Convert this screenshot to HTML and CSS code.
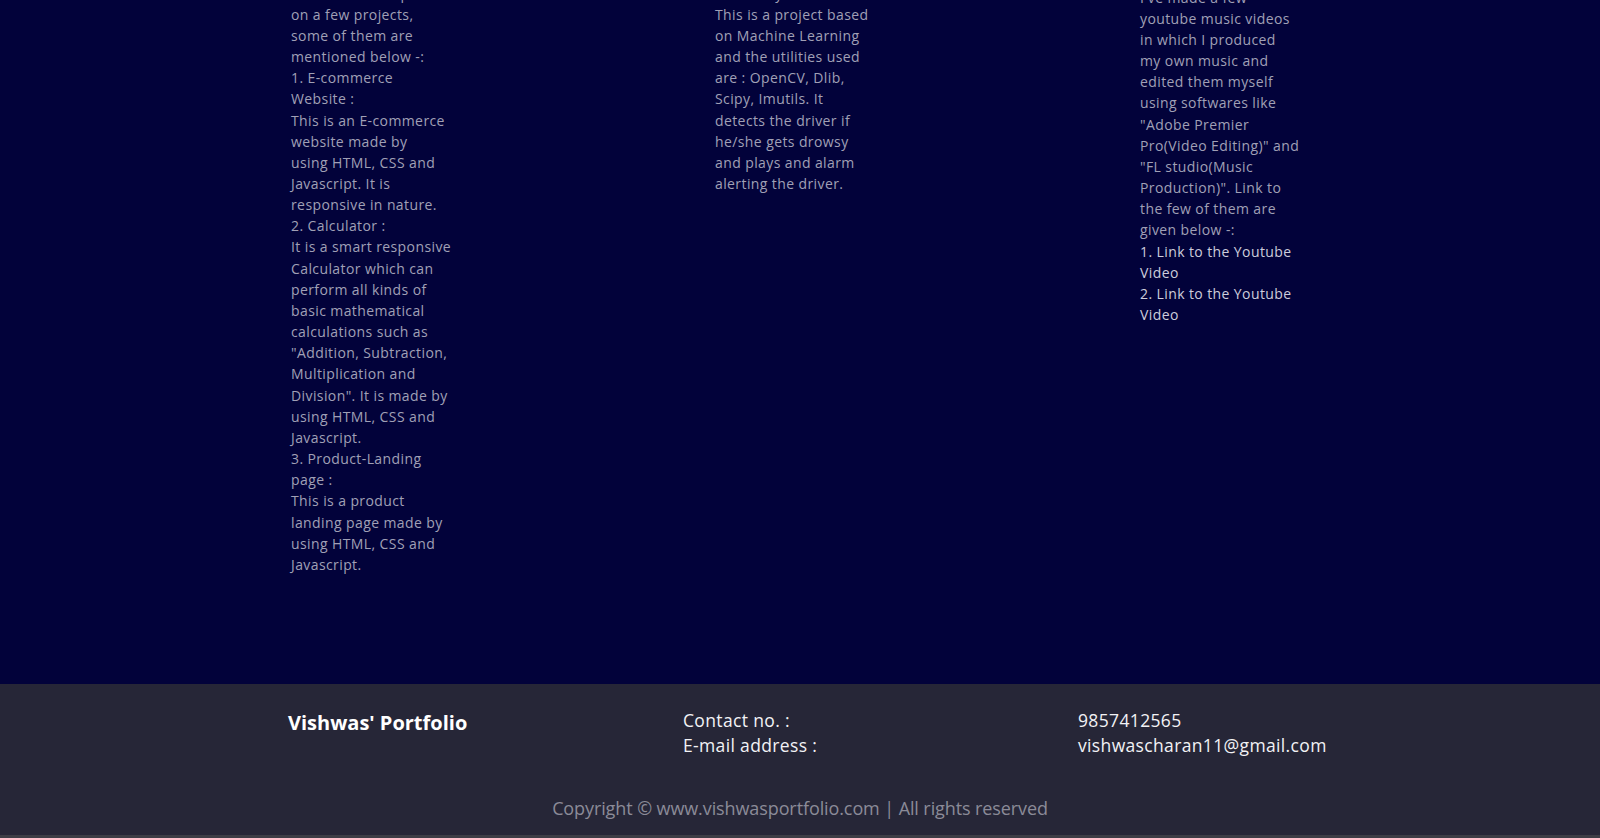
FILE: index.html
```html
<!DOCTYPE html>
<html lang="en">
<head>
<meta charset="utf-8">
<title>Vishwas' Portfolio</title>
<link rel="stylesheet" href="styles.css">
</head>
<body>
<main class="works">
  <section class="work">
    <p class="text">I have worked upon<br>on a few projects,<br>some of them are<br>mentioned below -:<br>1. E-commerce<br>Website :<br>This is an E-commerce<br>website made by<br>using HTML, CSS and<br>Javascript. It is<br>responsive in nature.<br>2. Calculator :<br>It is a smart responsive<br>Calculator which can<br>perform all kinds of<br>basic mathematical<br>calculations such as<br>"Addition, Subtraction,<br>Multiplication and<br>Division". It is made by<br>using HTML, CSS and<br>Javascript.<br>3. Product-Landing<br>page :<br>This is a product<br>landing page made by<br>using HTML, CSS and<br>Javascript.</p>
  </section>
  <section class="work">
    <p class="text">1. Drowsy Driver Alert :<br>This is a project based<br>on Machine Learning<br>and the utilities used<br>are : OpenCV, Dlib,<br>Scipy, Imutils. It<br>detects the driver if<br>he/she gets drowsy<br>and plays and alarm<br>alerting the driver.</p>
  </section>
  <section class="work work-shift">
    <p class="text">I've made a few<br>youtube music videos<br>in which I produced<br>my own music and<br>edited them myself<br>using softwares like<br>"Adobe Premier<br>Pro(Video Editing)" and<br>"FL studio(Music<br>Production)". Link to<br>the few of them are<br>given below -:<br><a class="link" href="#">1. Link to the Youtube<br>Video</a><br><a class="link" href="#">2. Link to the Youtube<br>Video</a></p>
  </section>
</main>
<footer class="footer">
  <div class="footer-top">
    <div class="brand">Vishwas' Portfolio</div>
    <div class="contact-labels">Contact no. :<br>E-mail address :</div>
    <div class="contact-values">9857412565<br>vishwascharan11@gmail.com</div>
  </div>
  <div class="copyright">Copyright © www.vishwasportfolio.com | All rights reserved</div>
</footer>
</body>
</html>
```

FILE: styles.css
```css
* { box-sizing: border-box; }
html, body { margin: 0; padding: 0; }
body {
  background: #02023a;
  font-family: "Open Sans", "DejaVu Sans", sans-serif;
  overflow: hidden;
  height: 838px;
}
.works {
  display: grid;
  grid-template-columns: 424px 425px 300px;
  padding-left: 291px;
  margin-top: -17.4px;
  height: 701.1px;
  background: #02023a;
}
.work-shift { padding-top: 4.1px; }
.text {
  margin: 0;
  font-size: 14px;
  line-height: 21.15px;
  letter-spacing: 0.4px;
  color: #a0a0b6;
  white-space: nowrap;
}
.link {
  color: #cdcddc;
  text-decoration: none;
}
.footer {
  background: #262637;
  padding: 24px 0 13.3px;
  border-bottom: 3px solid #3d3d45;
  height: 154.3px;
}
.footer-top {
  display: grid;
  grid-template-columns: 395px 395px 400px;
  padding-left: 288px;
  font-size: 17.5px;
  line-height: 25.5px;
  letter-spacing: 0.35px;
  color: #f2f2f5;
}
.brand {
  font-weight: 700;
  font-size: 20px;
  letter-spacing: 0;
  margin-top: 2px;
  color: #ffffff;
}
.copyright {
  margin-top: 36px;
  text-align: center;
  font-size: 18px;
  line-height: 27px;
  letter-spacing: -0.1px;
  color: #8b8b98;
}
```
